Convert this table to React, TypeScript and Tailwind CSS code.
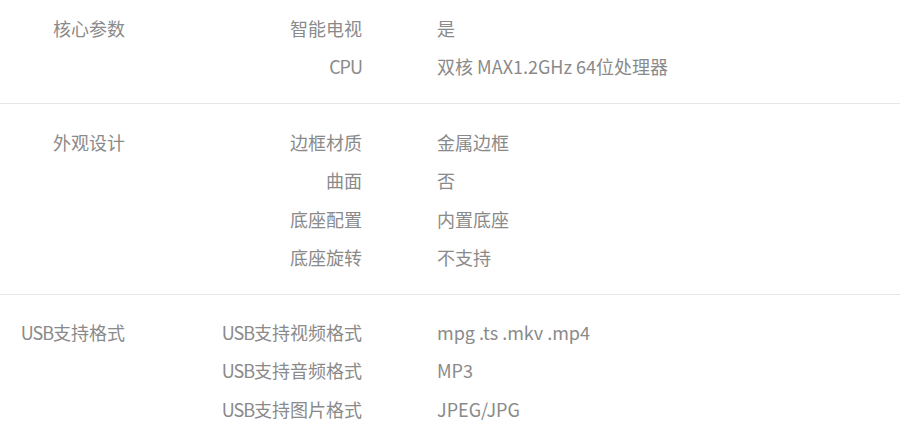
import React from "react";

type Section = { cat: React.ReactNode; rows: [React.ReactNode, string][]; pt: string; pb: string };

const U = () => <span className="tracking-[-1px]">USB</span>;

const sections: Section[] = [
  {
    cat: "核心参数",
    pt: "pt-[9px]",
    pb: "pb-[17px]",
    rows: [
      ["智能电视", "是"],
      [<span className="tracking-[-1px]">CPU</span>, "双核 MAX1.2GHz 64位处理器"],
    ],
  },
  {
    cat: "外观设计",
    pt: "pt-[19px]",
    pb: "pb-[17px]",
    rows: [
      ["边框材质", "金属边框"],
      ["曲面", "否"],
      ["底座配置", "内置底座"],
      ["底座旋转", "不支持"],
    ],
  },
  {
    cat: (
      <>
        <U />支持格式
      </>
    ),
    pt: "pt-[18px]",
    pb: "pb-[18px]",
    rows: [
      [<><U />支持视频格式</>, "mpg .ts .mkv .mp4"],
      [<><U />支持音频格式</>, "MP3"],
      [<><U />支持图片格式</>, "JPEG/JPG"],
    ],
  },
];

export default function App() {
  return (
    <div
      className="w-[900px] h-[427px] overflow-hidden bg-white text-[18px] text-[#8a8a8a]"
      style={{ fontFamily: '"Noto Sans CJK SC", sans-serif' }}
    >
      {sections.map((s, i) => (
        <div
          key={i}
          className={`flex ${s.pt} ${s.pb} ${i > 0 ? "border-t border-[#e6e6e6]" : ""}`}
        >
          <div className="w-[125px] shrink-0 text-right leading-[38.5px]">{s.cat}</div>
          <div className="flex flex-col">
            {s.rows.map(([k, v], j) => (
              <div key={j} className="flex h-[38.5px] items-center">
                <div className="w-[237px] shrink-0 text-right">{k}</div>
                <div className="pl-[75px] whitespace-nowrap">{v}</div>
              </div>
            ))}
          </div>
        </div>
      ))}
    </div>
  );
}
